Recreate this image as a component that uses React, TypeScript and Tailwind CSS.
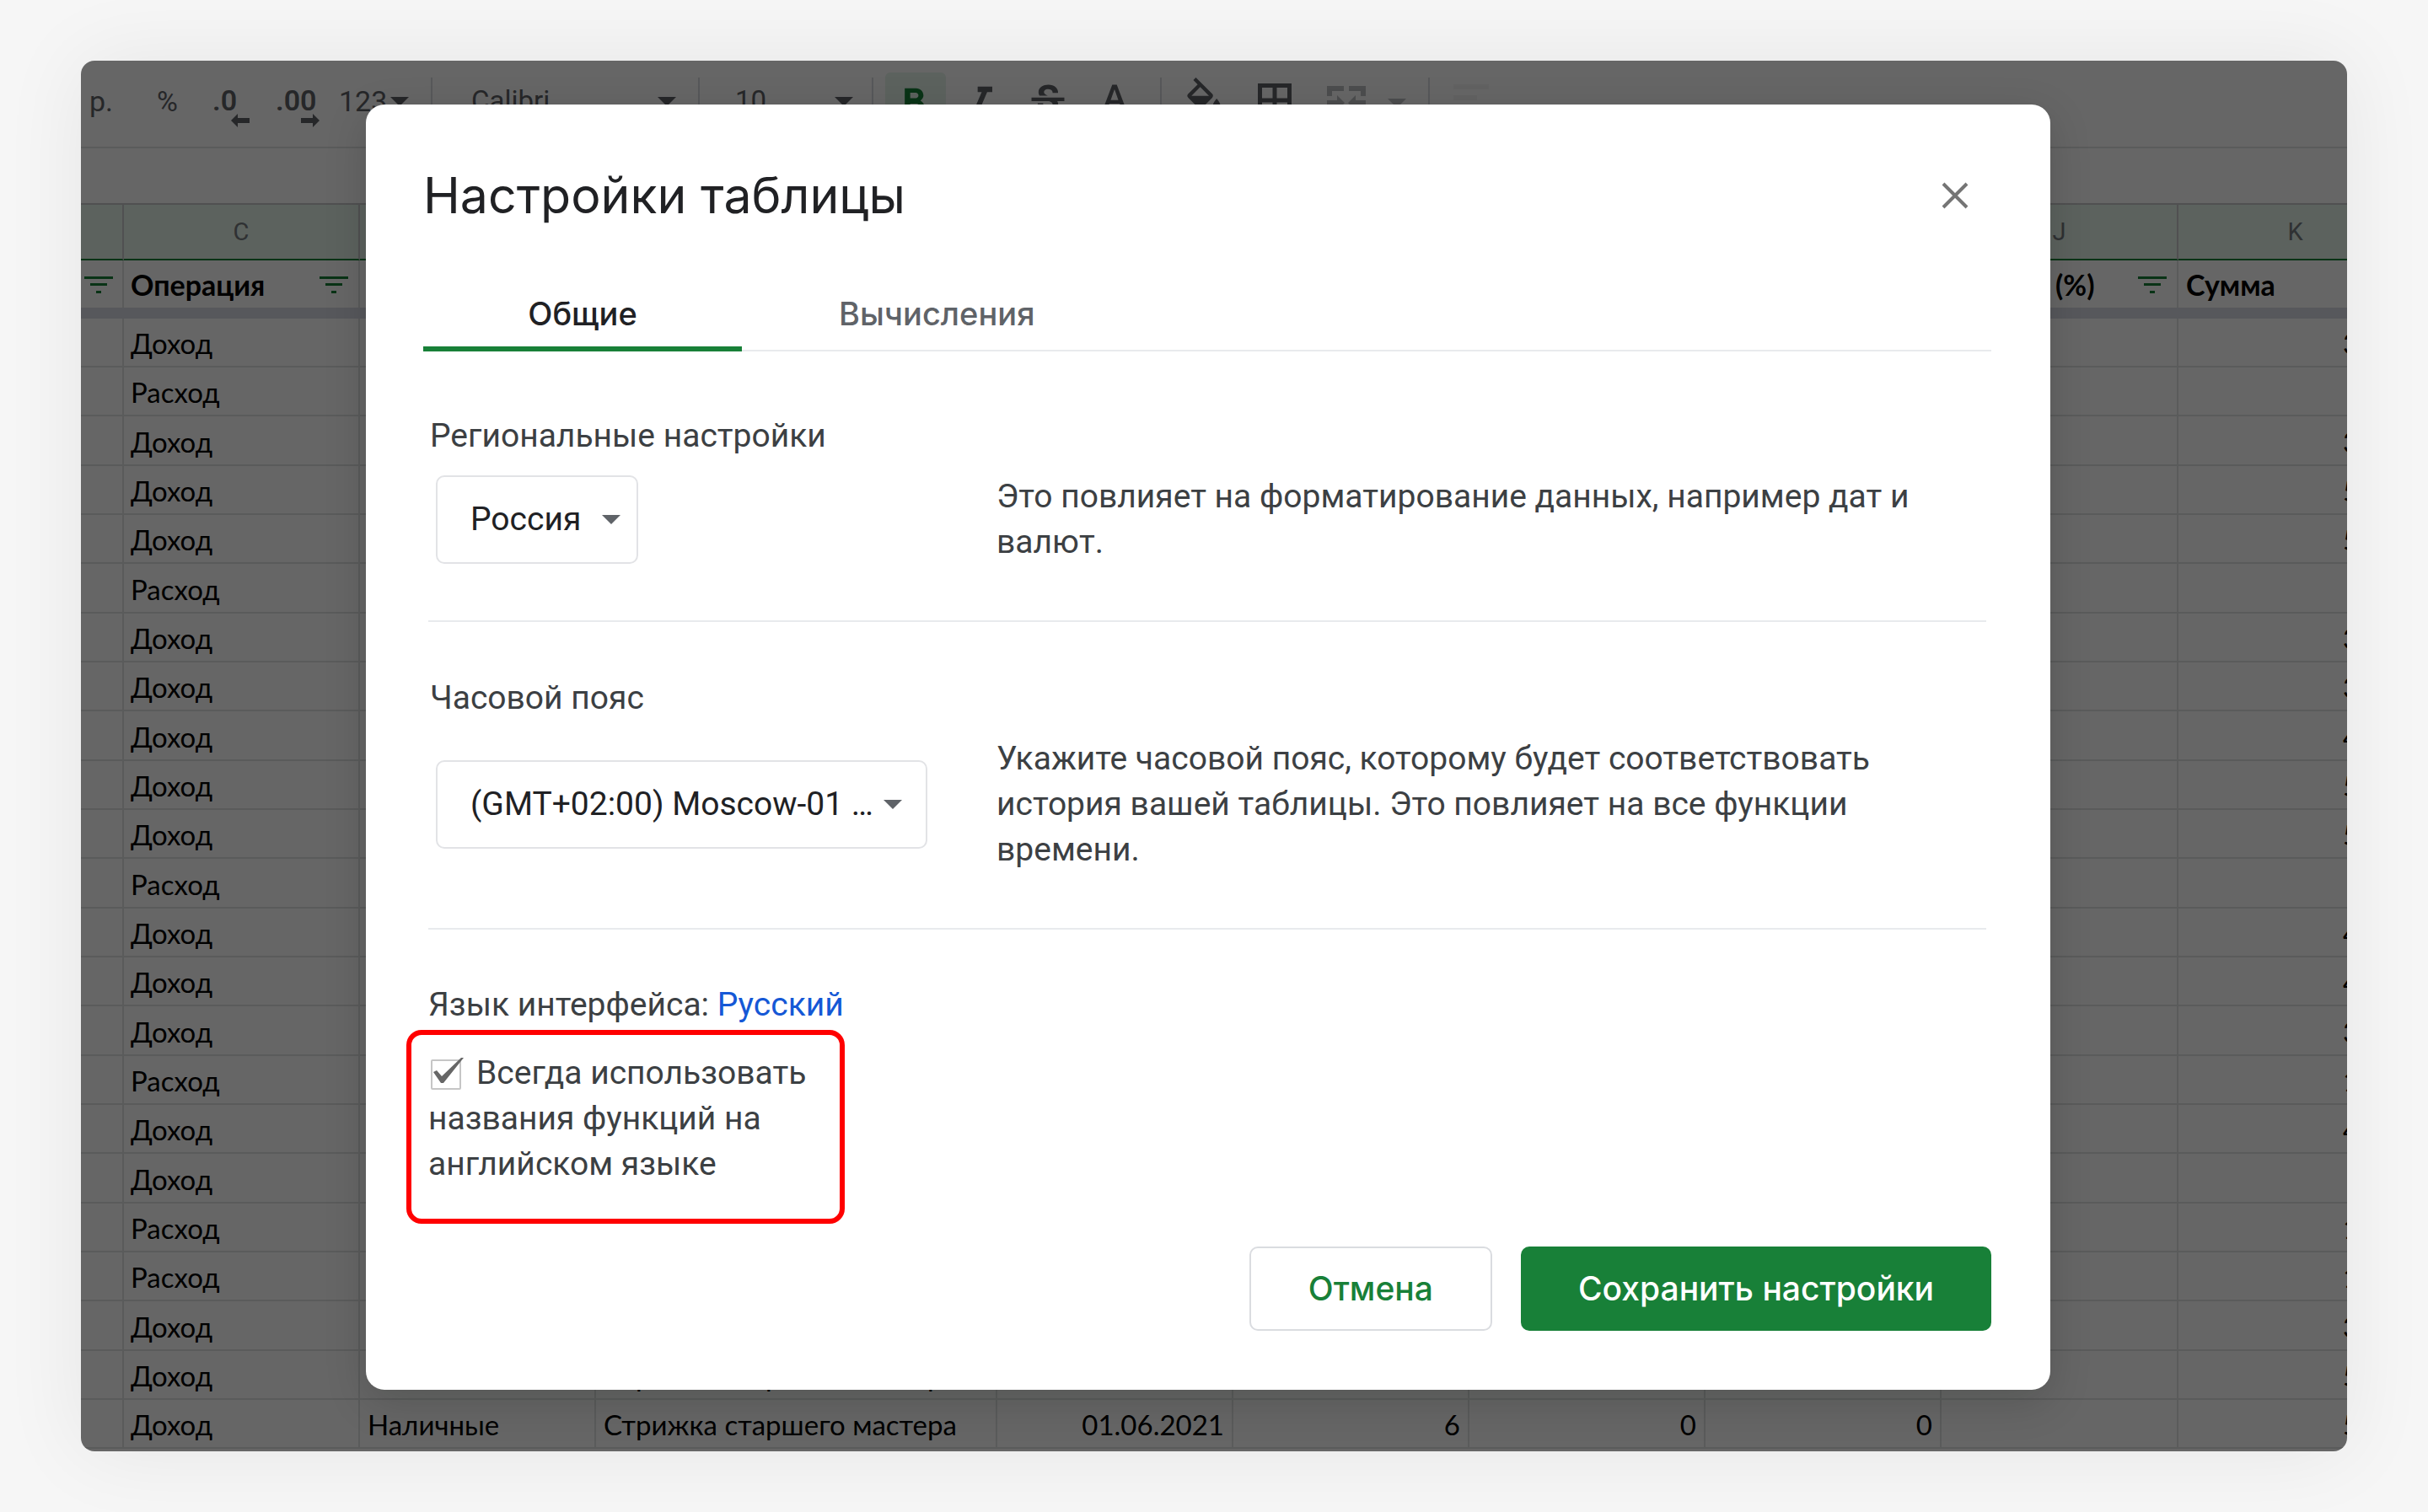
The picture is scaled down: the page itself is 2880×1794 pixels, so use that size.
import { useState } from "react";
import type { ReactNode } from "react";
import {
  MdFormatBold,
  MdFormatColorFill,
  MdFormatColorText,
  MdFormatItalic,
  MdStrikethroughS,
} from "react-icons/md";

type Operation = { kind: string; sum: string; account?: string; service?: string; date?: string; counts?: string[] };

const service = "Стрижка старшего мастера";

const operations: Operation[] = [
  { kind: "Доход", sum: "3" },
  { kind: "Расход", sum: "" },
  { kind: "Доход", sum: "3" },
  { kind: "Доход", sum: "5" },
  { kind: "Доход", sum: "5" },
  { kind: "Расход", sum: "" },
  { kind: "Доход", sum: "3" },
  { kind: "Доход", sum: "3" },
  { kind: "Доход", sum: "4" },
  { kind: "Доход", sum: "5" },
  { kind: "Доход", sum: "5" },
  { kind: "Расход", sum: "" },
  { kind: "Доход", sum: "4" },
  { kind: "Доход", sum: "4" },
  { kind: "Доход", sum: "3" },
  { kind: "Расход", sum: "1" },
  { kind: "Доход", sum: "4" },
  { kind: "Доход", sum: "" },
  { kind: "Расход", sum: "1" },
  { kind: "Расход", sum: "1" },
  { kind: "Доход", sum: "3" },
  { kind: "Доход", sum: "5", service },
  { kind: "Доход", sum: "5", account: "Наличные", service, date: "01.06.2021", counts: ["6", "0", "0"] },
];

function Caret({ className = "" }: { className?: string }) {
  return (
    <svg viewBox="0 0 22 11" className={`h-[11px] w-[22px] shrink-0 ${className}`} aria-hidden="true">
      <path d="M0 0h22L11 11z" fill="currentColor" />
    </svg>
  );
}

function FilterIcon() {
  return (
    <svg viewBox="0 0 34 20" className="h-5 w-[34px] shrink-0 text-[#188038]" aria-hidden="true">
      <path d="M0 0h34v3H0zM7 8h20v3H7zM14 17h6v3h-6z" fill="currentColor" />
    </svg>
  );
}

function Separator() {
  return <span className="h-[62px] w-0.5 shrink-0 bg-[#dadce0]" />;
}

function DecimalButton({ label, text, left }: { label: string; text: string; left?: boolean }) {
  return (
    <button type="button" aria-label={label} className="flex w-[75px] shrink-0 flex-col items-start pt-[7px]">
      <span className="text-[34px] leading-10 font-semibold">{text}</span>
      <svg
        viewBox="0 0 22 16"
        className={left ? "-mt-1 ml-[22px] h-4 w-[22px]" : "-mt-1 ml-[30px] h-4 w-[22px]"}
        aria-hidden="true"
      >
        <path d={left ? "M0 8 8 0v5h14v6H8v5z" : "M22 8 14 0v5H0v6h14v5z"} fill="currentColor" />
      </svg>
    </button>
  );
}

function IconButton({ label, wide, children }: { label: string; wide?: boolean; children: ReactNode }) {
  return (
    <button
      type="button"
      aria-label={label}
      className={wide ? "flex w-[84px] shrink-0 justify-center" : "flex w-[79px] shrink-0 justify-center"}
    >
      {children}
    </button>
  );
}

function Toolbar() {
  return (
    <div className="flex h-[104px] shrink-0 items-start border-b-2 border-[#e2e3e3] bg-white pt-5 pl-2.5 text-[34px] leading-10 text-[#5f6368]">
      <button type="button" className="w-[80px] shrink-0 pt-2 text-left">р.</button>
      <button type="button" className="w-[66px] shrink-0 pt-2 text-left">%</button>
      <DecimalButton label="Уменьшить число знаков" text=".0" left />
      <DecimalButton label="Увеличить число знаков" text=".00" />
      <button type="button" className="flex w-[109px] shrink-0 items-center gap-1 pt-2">
        123
        <Caret />
      </button>
      <Separator />
      <button type="button" className="flex w-[315px] shrink-0 items-center justify-between pt-2 pr-[26px] pl-[46px] text-[33px]">
        Calibri
        <Caret />
      </button>
      <Separator />
      <button type="button" className="flex w-[204px] shrink-0 items-center justify-between pt-2 pr-[22px] pl-[42px] text-[33px]">
        10
        <Caret />
      </button>
      <Separator />
      <div className="-mt-1.5 flex">
        <button
          type="button"
          aria-label="Полужирный"
          aria-pressed="true"
          className="ml-3.5 flex h-[72px] w-[72px] shrink-0 justify-center rounded-md bg-[#e6f4ea] pt-2.5 pr-1 text-[#188038]"
        >
          <MdFormatBold className="size-[52px]" />
        </button>
        <div className="flex pt-2 pl-0.5">
          <IconButton label="Курсив"><MdFormatItalic className="size-[52px]" /></IconButton>
          <IconButton label="Зачеркнутый"><MdStrikethroughS className="size-[52px]" /></IconButton>
          <IconButton label="Цвет текста"><MdFormatColorText className="size-[52px]" /></IconButton>
        </div>
      </div>
      <span className="w-[15px] shrink-0" />
      <Separator />
      <div className="flex pl-2">
        <IconButton wide label="Цвет заливки"><MdFormatColorFill className="size-[52px]" /></IconButton>
        <IconButton wide label="Границы">
          <svg viewBox="0 0 40 40" className="mt-[7px] size-10" fill="none" stroke="currentColor" strokeWidth="5" aria-hidden="true">
            <path d="M2.5 2.5h35v35h-35zM20 2v36M2 20h36" />
          </svg>
        </IconButton>
        <button type="button" aria-label="Объединить ячейки" disabled className="flex w-[140px] shrink-0 items-start gap-[26px] pt-2.5 pl-5 opacity-40">
          <svg viewBox="0 0 46 40" className="h-10 w-[46px]" aria-hidden="true">
            <path
              d="M0 0h20v6H6v6H0zM26 0h20v12h-6V6H26zM0 28h6v6h14v6H0zM40 28h6v12H26v-6h14zM0 17h12v-6l9 9-9 9v-6H0zM46 17H34v-6l-9 9 9 9v-6h12z"
              fill="currentColor"
            />
          </svg>
          <Caret className="mt-[15px]" />
        </button>
      </div>
      <Separator />
      <svg viewBox="0 0 42 36" className="mt-2 ml-7 h-9 w-[42px] opacity-5" aria-hidden="true">
        <path d="M0 0h42v6H0zM0 13h28v6H0zM0 26h42v6H0z" fill="currentColor" />
      </svg>
    </div>
  );
}

const columnLetters = ["", "C", "D", "E", "F", "G", "H", "I", "J", "K"];

function Sheet() {
  return (
    <div className="flex min-w-0 flex-1 flex-col overflow-hidden bg-white font-[Roboto,sans-serif]">
      <Toolbar />
      <div className="h-[65px] shrink-0" />
      <table className="w-[2767px] table-fixed border-separate border-spacing-0 font-[Lato,sans-serif] text-[33px] leading-10 text-black [&_td]:border-r-2 [&_td]:border-b-2 [&_td]:border-[#e2e3e3] [&_td]:p-0 [&_td]:pt-0.5 [&_th]:border-r-2 [&_th]:p-0">
        <colgroup>
          <col className="w-[51px]" />
          <col className="w-[280px]" />
          <col className="w-[280px]" />
          <col className="w-[476px]" />
          <col className="w-[280px]" />
          <col className="w-[280px]" />
          <col className="w-[280px]" />
          <col className="w-[280px]" />
          <col className="w-[281px]" />
          <col className="w-[279px]" />
        </colgroup>
        <thead>
          <tr className="h-[68px] bg-[#e6f4ea] font-[Roboto,sans-serif] text-[29px] leading-9 text-[#757a7f]">
            {columnLetters.map((letter, i) => (
              <th key={i} className="border-t-2 border-b-2 border-t-[#c7c9cb] border-r-[#c7c9cb] border-b-[#188038] font-normal">
                {letter}
              </th>
            ))}
          </tr>
          <tr className="h-14 text-left text-[34px] [&_th]:border-[#e2e3e3] [&_th]:pt-0.5">
            <th><div className="pl-1"><FilterIcon /></div></th>
            <th><div className="flex items-center justify-between pr-3 pl-2">Операция<FilterIcon /></div></th>
            <th />
            <th />
            <th />
            <th />
            <th />
            <th />
            <th><div className="flex items-center justify-between pr-3 pl-[135px]">(%)<FilterIcon /></div></th>
            <th><div className="pl-[9px]">Сумма</div></th>
          </tr>
          <tr className="h-[13px] bg-[#dadde7]">
            <th colSpan={10} className="border-0" />
          </tr>
        </thead>
        <tbody>
          {operations.map((row, i) => (
            <tr key={i} className={i % 3 === 2 ? "h-[59px]" : "h-[58px]"}>
              <td />
              <td><div className="pl-2">{row.kind}</div></td>
              <td><div className="pl-[9px]">{row.account}</div></td>
              <td><div className="pl-[9px] whitespace-nowrap">{row.service}</div></td>
              <td><div className="pr-[9px] text-right">{row.date}</div></td>
              <td><div className="pr-[9px] text-right">{row.counts?.[0]}</div></td>
              <td><div className="pr-[9px] text-right">{row.counts?.[1]}</div></td>
              <td><div className="pr-[9px] text-right">{row.counts?.[2]}</div></td>
              <td />
              <td><div className="pl-[195px]">{row.sum}</div></td>
            </tr>
          ))}
        </tbody>
      </table>
    </div>
  );
}

function SettingSelect({ id, options, className, caret }: { id: string; options: string[]; className: string; caret: string }) {
  return (
    <div className={`relative ml-[9px] ${className}`}>
      <select
        id={id}
        className="h-[105px] w-full appearance-none rounded-[10px] border-2 border-[#e2e3e6] bg-white pl-[39px] text-[39px] text-[#202124]"
      >
        {options.map((o) => (
          <option key={o}>{o}</option>
        ))}
      </select>
      <Caret className={`pointer-events-none absolute top-[47px] text-[#5f6368] ${caret}`} />
    </div>
  );
}

function SettingsDialog() {
  const [tab, setTab] = useState(0);
  const [english, setEnglish] = useState(true);
  return (
    <section
      role="dialog"
      aria-labelledby="settings-title"
      className="flex-1 rounded-[22px] bg-white pt-[72px] pr-[70px] pb-[70px] pl-[68px] font-[Roboto,sans-serif] text-[39px] leading-[54px] text-[#3c4043] shadow-[0_14px_50px_rgba(0,10,5,0.16)]"
    >
      <header className="flex items-center justify-between">
        <h1 id="settings-title" className="font-[Inter,sans-serif] text-[59px] leading-[72px] text-[#202124]">
          Настройки таблицы
        </h1>
        <button type="button" aria-label="Закрыть" className="mr-[19px] flex size-12 items-center justify-center">
          <svg viewBox="0 0 32 32" className="size-8" fill="none" stroke="#757575" strokeWidth="4" aria-hidden="true">
            <path d="M2 2l28 28M30 2 2 30" />
          </svg>
        </button>
      </header>

      <div role="tablist" className="mt-20 flex font-[Inter,sans-serif] text-[38px] leading-[48px] font-medium shadow-[inset_0_-2px_0_#e8eaed]">
        {["Общие", "Вычисления"].map((name, i) => (
          <button
            key={name}
            type="button"
            role="tab"
            aria-selected={tab === i}
            onClick={() => setTab(i)}
            className={
              tab === i
                ? "min-w-[378px] border-b-6 border-[#188038] px-[115px] pb-[15px] text-[#202124]"
                : "min-w-[378px] border-b-6 border-transparent px-[115px] pb-[15px] text-[#5f6368]"
            }
          >
            {name}
          </button>
        ))}
      </div>

      <div className="mr-[6px] ml-[6px]">
        <div className="border-b-2 border-[#e8eaed] pt-[73px] pb-[66px]">
          <label htmlFor="locale" className="ml-0.5">Региональные настройки</label>
          <div className="mt-[18px] grid grid-cols-[674px_1fr] items-center">
            <SettingSelect id="locale" options={["Россия"]} className="w-60" caret="right-[21px]" />
            <p className="max-w-[1110px]">Это повлияет на форматирование данных, например дат и валют.</p>
          </div>
        </div>

        <div className="border-b-2 border-[#e8eaed] pt-[63px] pb-[66px]">
          <label htmlFor="timezone" className="ml-0.5">Часовой пояс</label>
          <div className="mt-[18px] grid grid-cols-[674px_1fr] items-center">
            <SettingSelect id="timezone" options={["(GMT+02:00) Moscow-01 …"]} className="w-[583px]" caret="right-[30px]" />
            <p className="max-w-[1110px]">
              Укажите часовой пояс, которому будет соответствовать история вашей таблицы. Это повлияет на все функции
              времени.
            </p>
          </div>
        </div>

        <p className="pt-[62px]">
          Язык интерфейса:{" "}
          <a href="#language" className="text-[#1558d6]">Русский</a>
        </p>
        <div className="mt-[3px] -ml-[26px] w-[520px] rounded-[18px] border-6 border-[#ff0000] pt-[18px] pb-[38px] pl-5">
          <label>
            <span className="relative mr-[18px] ml-[3px] inline-block size-9 align-[-7px]">
              <input
                type="checkbox"
                checked={english}
                onChange={(e) => setEnglish(e.target.checked)}
                className="block size-9 appearance-none rounded-[2px] border-2 border-[#c6c6c6] bg-white"
              />
              {english && (
                <svg viewBox="0 0 38 32" className="pointer-events-none absolute -top-0.5 left-[3px] h-8 w-[38px]" aria-hidden="true">
                  <path d="M0 17l4-2 6 7L33 0h3L12 30h-3z" fill="#666" />
                </svg>
              )}
            </span>
            Всегда использовать названия функций на английском языке
          </label>
        </div>
      </div>

      <footer className="mt-[27px] flex justify-end gap-[34px] font-[Inter,sans-serif] text-[39px] leading-[48px] font-medium">
        <button type="button" className="h-[100px] rounded-[10px] border-2 border-[#dadce0] px-[68px] text-[#188038]">
          Отмена
        </button>
        <button type="button" className="h-[100px] rounded-[10px] bg-[#188038] px-[68px] text-white">
          Сохранить настройки
        </button>
      </footer>
    </section>
  );
}

export default function App() {
  return (
    <main className="flex h-screen bg-[#f6f6f6] px-24 py-[72px]">
      <div className="relative flex min-w-0 flex-1 overflow-hidden rounded-2xl shadow-[0_0_100px_rgba(0,0,0,0.07)]">
        <Sheet />
        <div className="absolute inset-0 flex items-start bg-black/60 pt-[52px] pr-[352px] pl-[338px]">
          <SettingsDialog />
        </div>
      </div>
    </main>
  );
}
